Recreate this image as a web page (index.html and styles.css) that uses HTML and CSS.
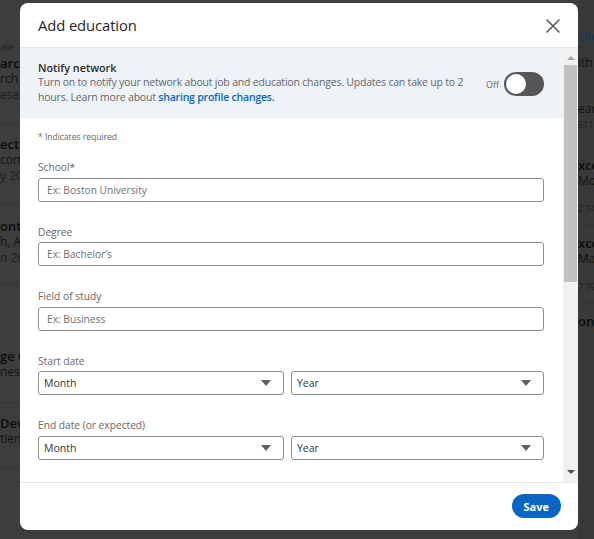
FILE: index.html
```html
<!DOCTYPE html>
<html lang="en">
<head>
<meta charset="utf-8">
<title>Add education</title>
<link rel="stylesheet" href="styles.css">
</head>
<body>
<div class="page">
  <div class="bg-left">
    <div class="bg-item item-1">
      <div class="bg-small">ate</div>
      <div class="bg-title">arch</div>
      <div class="bg-line">rch</div>
      <div class="bg-line muted">esen</div>
    </div>
    <div class="bg-item item-2">
      <div class="bg-title">ect</div>
      <div class="bg-line">com</div>
      <div class="bg-line muted">y 20</div>
    </div>
    <div class="bg-item item-3">
      <div class="bg-title">onte</div>
      <div class="bg-line">h, AB</div>
      <div class="bg-line muted">n 20</div>
    </div>
    <div class="bg-item item-4">
      <div class="bg-title">ge C</div>
      <div class="bg-line">nes</div>
    </div>
    <div class="bg-item item-5">
      <div class="bg-title">Devi</div>
      <div class="bg-line">tienc</div>
    </div>
  </div>
  <div class="bg-right">
    <div class="bg-tab">file</div>
    <div class="bg-r-block r-1">
      <div class="bg-line">ith</div>
      <div class="bg-line gap-line">ear</div>
      <div class="bg-small">611</div>
    </div>
    <div class="bg-r-block r-2">
      <div class="bg-title">xce</div>
      <div class="bg-line">Moc</div>
      <div class="bg-small low">2 74</div>
    </div>
    <div class="bg-r-block r-3">
      <div class="bg-title">xce</div>
      <div class="bg-line">Map</div>
      <div class="bg-small low">7 79</div>
    </div>
    <div class="bg-r-block r-4">
      <div class="bg-title">on</div>
    </div>
  </div>
</div>

<div class="modal" role="dialog" aria-label="Add education">
  <div class="modal-header">
    <h2 class="modal-title">Add education</h2>
    <button class="close-btn" aria-label="Dismiss">
      <svg width="14" height="14" viewBox="0 0 14 14"><path d="M1 1 L13 13 M13 1 L1 13" stroke="#595959" stroke-width="1.6" fill="none" stroke-linecap="round"/></svg>
    </button>
  </div>
  <div class="modal-main">
    <div class="modal-content">
      <div class="notify">
        <div class="notify-text">
          <div class="notify-title">Notify network</div>
          <p class="notify-desc">Turn on to notify your network about job and education changes. Updates can take up to 2<br>hours. Learn more about <a class="link">sharing profile changes.</a></p>
        </div>
        <div class="toggle-wrap">
          <span class="toggle-label">Off</span>
          <span class="toggle"><span class="knob"></span></span>
        </div>
      </div>
      <div class="form">
        <div class="required-note">* Indicates required</div>
        <div class="field">
          <label class="field-label">School*</label>
          <div class="input"><span class="placeholder">Ex: Boston University</span></div>
        </div>
        <div class="field">
          <label class="field-label">Degree</label>
          <div class="input"><span class="placeholder">Ex: Bachelor’s</span></div>
        </div>
        <div class="field">
          <label class="field-label">Field of study</label>
          <div class="input"><span class="placeholder">Ex: Business</span></div>
        </div>
        <div class="field">
          <label class="field-label">Start date</label>
          <div class="select-row">
            <div class="select month"><span>Month</span><span class="caret"></span></div>
            <div class="select year"><span>Year</span><span class="caret"></span></div>
          </div>
        </div>
        <div class="field">
          <label class="field-label">End date (or expected)</label>
          <div class="select-row">
            <div class="select month"><span>Month</span><span class="caret"></span></div>
            <div class="select year"><span>Year</span><span class="caret"></span></div>
          </div>
        </div>
      </div>
    </div>
    <div class="scrollbar">
      <span class="sb-arrow up"></span>
      <div class="sb-track"><div class="sb-thumb"></div></div>
      <span class="sb-arrow down"></span>
    </div>
  </div>
  <div class="modal-footer">
    <button class="save-btn">Save</button>
  </div>
</div>
</body>
</html>
```

FILE: styles.css
```css
* { box-sizing: border-box; }

html, body {
  margin: 0;
  padding: 0;
  width: 594px;
  height: 539px;
  overflow: hidden;
  background: #3d3d3d;
  font-family: "Open Sans", "Noto Sans", "DejaVu Sans", sans-serif;
}

/* dimmed background page */
.page {
  display: flex;
  justify-content: space-between;
  height: 539px;
  background: #3d3d3d;
  color: #101010;
}

.bg-left {
  width: 20px;
  padding-top: 39px;
  white-space: nowrap;
  overflow: hidden;
}

.bg-item { border-bottom: 1px solid #353535; }
.item-1 { padding-bottom: 21px; }
.item-2 { padding: 11px 0 20px; }
.item-3 { padding: 13px 0 17px; border-bottom: 3px double #353535; }
.item-4 { padding: 62px 0 22px; }
.item-5 { padding: 12px 0 20px; }

.bg-title { font-size: 13px; line-height: 16px; font-weight: 600; color: #0c0c0c; }
.bg-line { font-size: 12px; line-height: 16px; color: #121212; }
.bg-line.muted { color: #1d1d1d; }
.bg-small { font-size: 9px; line-height: 16px; color: #1e1e1e; }

.bg-right {
  width: 16px;
  white-space: nowrap;
  overflow: hidden;
  padding-top: 28px;
  background: #393939;
}
.bg-tab {
  font-size: 13px;
  line-height: 17px;
  font-weight: 600;
  color: #1a3552;
  padding-left: 1px;
  padding-bottom: 2px;
  border-bottom: 1px solid #2a3a4a;
}
.bg-r-block { border-bottom: 1px solid #333; }
.r-1 { padding: 7px 0 14px; }
.r-1 .gap-line { margin-top: 30px; }
.r-2 { padding: 9px 0 7px; }
.r-3 { padding: 10px 0 7px; }
.r-4 { padding: 10px 0 9px; }
.bg-small.low { margin-top: 12px; }

/* modal */
.modal {
  position: absolute;
  left: 20px;
  top: 3px;
  width: 558px;
  height: 527px;
  background: #fff;
  border-radius: 8px;
  display: flex;
  flex-direction: column;
  overflow: hidden;
  color: #333;
}

.modal-header {
  height: 45px;
  flex: none;
  display: flex;
  align-items: center;
  justify-content: space-between;
  padding: 0 16px 0 18px;
  border-bottom: 1px solid #e6e9ec;
}

.modal-title {
  margin: 0;
  font-size: 14.8px;
  font-weight: 400;
  color: #262626;
  letter-spacing: -0.1px;
}

.close-btn {
  border: 0;
  background: none;
  padding: 0;
  width: 18px;
  height: 18px;
  display: flex;
  align-items: center;
  justify-content: center;
  margin-top: 2px;
}

.modal-main {
  flex: 1;
  display: flex;
  min-height: 0;
}

.modal-content {
  flex: 1;
  min-width: 0;
}

.notify {
  background: #eef3f8;
  height: 70px;
  display: flex;
  align-items: flex-start;
  padding: 12px 19px 0 18px;
}

.notify-text { flex: 1; }

.notify-title {
  font-size: 10.8px;
  line-height: 15px;
  font-weight: 600;
  color: #2a2a2a;
}

.notify-desc {
  margin: 0;
  font-size: 10.5px;
  line-height: 15px;
  letter-spacing: -0.2px;
  color: #666;
  white-space: nowrap;
}

.link {
  color: #0a66c2;
  font-weight: 600;
}

.toggle-wrap {
  display: flex;
  align-items: center;
  gap: 5px;
  margin-top: 12px;
}

.toggle-label {
  font-size: 9px;
  color: #666;
}

.toggle {
  width: 40px;
  height: 24px;
  border-radius: 12px;
  background: #565656;
  display: flex;
  align-items: center;
  padding-left: 2px;
}

.knob {
  width: 20px;
  height: 20px;
  border-radius: 50%;
  background: #fff;
}

.form {
  padding: 13px 19px 0 18px;
}

.required-note {
  font-size: 8.5px;
  line-height: 12px;
  color: #666;
  margin-bottom: 17px;
}

.field + .field { margin-top: 23px; }

.field-label {
  display: block;
  font-size: 10.2px;
  line-height: 14px;
  color: #666;
  margin-bottom: 3.5px;
}

.input {
  height: 24px;
  border: 1px solid #8c8c8c;
  border-radius: 3px;
  display: flex;
  align-items: center;
  padding: 0 8px;
}

.placeholder {
  font-size: 10.2px;
  color: #6f6f6f;
}

.select-row {
  display: flex;
  gap: 7px;
}

.select {
  height: 24px;
  border: 1px solid #8c8c8c;
  border-radius: 3px;
  display: flex;
  align-items: center;
  justify-content: space-between;
  padding: 0 12px 0 5px;
  font-size: 10.5px;
  color: #333;
}
.select.month { width: 246px; }
.select.year { flex: 1; }

.caret {
  width: 0;
  height: 0;
  border-left: 5px solid transparent;
  border-right: 5px solid transparent;
  border-top: 6px solid #5f5f5f;
}

.scrollbar {
  width: 15px;
  flex: none;
  background: #f1f1f1;
  display: flex;
  flex-direction: column;
  align-items: center;
}

.sb-arrow {
  width: 0;
  height: 0;
  border-left: 4px solid transparent;
  border-right: 4px solid transparent;
  flex: none;
}
.sb-arrow.up {
  border-bottom: 4px solid #a3a3a3;
  margin-top: 8px;
}
.sb-arrow.down {
  border-top: 4px solid #505050;
  margin-bottom: 8px;
}

.sb-track {
  flex: 1;
  width: 100%;
  padding: 5px 1px 0 1px;
}

.sb-thumb {
  height: 217px;
  background: #c1c1c1;
}

.modal-footer {
  height: 48px;
  flex: none;
  border-top: 1px solid #e6e9ec;
  display: flex;
  align-items: center;
  justify-content: flex-end;
  padding: 0 17px 0 0;
}

.save-btn {
  border: 0;
  height: 24px;
  padding: 0 12px;
  border-radius: 12px;
  background: #0a66c2;
  color: #fff;
  font-family: "Open Sans", "Noto Sans", sans-serif;
  font-weight: 700;
  font-size: 11px;
  margin-top: -1px;
}
```
